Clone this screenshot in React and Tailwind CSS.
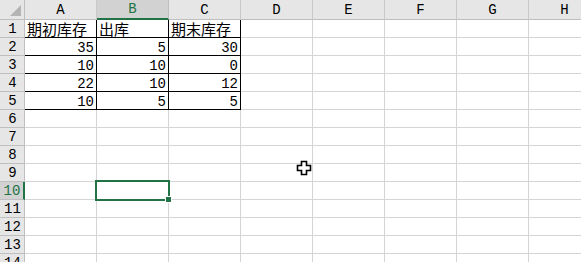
import React from "react";

// 表格数据
const COLS = ["A", "B", "C", "D", "E", "F", "G", "H"];
const DATA = [
  ["期初库存", "出库", "期末库存"],
  [35, 5, 30],
  [10, 10, 0],
  [22, 10, 12],
  [10, 5, 5],
];
const ROWS = Array.from({ length: 14 }, (_, i) => i + 1);
const SEL_COL = 1; // B
const SEL_ROW = 10;

function Corner() {
  return (
    <div className="relative w-[25px] h-[20px] shrink-0 bg-[#e6e6e6] border-r border-b border-[#bfbfbf]">
      <div className="absolute right-[3px] bottom-[3px] w-0 h-0 border-l-[11px] border-l-transparent border-b-[11px] border-b-[#b4b4b4]" />
    </div>
  );
}

function ColHeader({ label, selected }) {
  return (
    <div
      className={`w-[72px] h-[20px] shrink-0 flex items-center justify-center border-r font-['Liberation_Mono',monospace] text-[14px] leading-none ${
        selected
          ? "bg-[#d2d2d2] text-[#217346] border-r-[#bfbfbf] border-b-2 border-b-[#217346]"
          : "bg-[#e6e6e6] text-black border-r-[#c8c8c8] border-b border-b-[#bfbfbf]"
      }`}
    >
      {label}
    </div>
  );
}

function RowHeader({ n, selected }) {
  return (
    <div
      className={`w-[25px] h-[18px] shrink-0 flex items-center justify-center border-b border-b-[#bfbfbf] font-['Liberation_Mono',monospace] text-[14px] leading-none ${
        selected
          ? "bg-[#d2d2d2] text-[#217346] border-r-2 border-r-[#217346]"
          : "bg-[#e6e6e6] text-black border-r border-r-[#bfbfbf]"
      }`}
    >
      <span className="pl-[1px]">{n}</span>
    </div>
  );
}

function Cell({ value, bordered }) {
  const isText = typeof value === "string";
  return (
    <div
      className={`w-[72px] h-[18px] shrink-0 flex items-center border-r border-b bg-white ${
        bordered ? "border-black" : "border-[#d4d4d4]"
      } ${isText ? "justify-start pl-[2px]" : "justify-end pr-[2px]"}`}
    >
      {value !== undefined && (
        <span
          className={
            isText
              ? "font-['Noto_Sans_CJK_SC',sans-serif] text-[15px] leading-[15px] whitespace-nowrap"
              : "font-['Liberation_Mono',monospace] text-[14px] leading-[14px] pt-[2px] text-black"
          }
        >
          {value}
        </span>
      )}
    </div>
  );
}

function PlusCursor() {
  return (
    <svg
      className="absolute left-[296px] top-[160px]"
      width="17"
      height="17"
      viewBox="0 0 17 17"
    >
      <polygon
        points="5.5,1.5 10.5,1.5 10.5,5.5 14.5,5.5 14.5,10.5 10.5,10.5 10.5,14.5 5.5,14.5 5.5,10.5 1.5,10.5 1.5,5.5 5.5,5.5"
        fill="white"
        stroke="black"
        strokeWidth="1.6"
        strokeLinejoin="miter"
      />
    </svg>
  );
}

export default function App() {
  return (
    <div className="relative w-[581px] h-[262px] overflow-hidden bg-white select-none">
      <div className="flex flex-col w-max">
        <div className="flex">
          <Corner />
          {COLS.map((c, i) => (
            <ColHeader key={c} label={c} selected={i === SEL_COL} />
          ))}
        </div>
        {ROWS.map((r) => (
          <div key={r} className="flex">
            <RowHeader n={r} selected={r === SEL_ROW} />
            {COLS.map((c, ci) => {
              const row = DATA[r - 1];
              const inTable = r <= DATA.length && ci < 3;
              return <Cell key={c} value={inTable ? row[ci] : undefined} bordered={inTable} />;
            })}
          </div>
        ))}
      </div>

      {/* 选中单元格 B10 */}
      <div className="absolute left-[95px] top-[180px] w-[75px] h-[21px] border-2 border-[#217346]" />
      <div className="absolute left-[165px] top-[196px] w-[7px] h-[7px] bg-[#217346] border border-white" />

      <PlusCursor />
    </div>
  );
}
